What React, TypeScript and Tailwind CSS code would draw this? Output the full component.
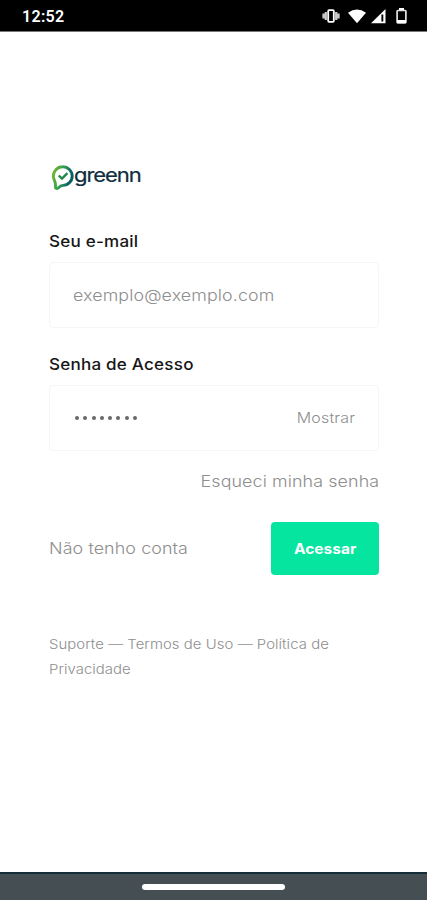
import type { ReactNode } from 'react';

type FieldProps = {
  label: string;
  children: ReactNode;
};

function StatusBar() {
  return (
    <header className="flex h-8 items-center justify-between border-b border-[#777] bg-black pr-[19px] pl-[22px] text-white">
      <span className="mt-[2px] font-[Roboto] text-[16px] leading-5 font-semibold tracking-[0.3px]">
        12:52
      </span>
      <svg width="86" height="18" viewBox="0 0 86 18" fill="white">
        <path d="M1.5 6.5v5M3.8 5v8M14.2 5v8M16.5 6.5v5" stroke="#c8c8c8" strokeWidth="2.3" />
        <rect x="6.2" y="3.2" width="5.6" height="11.6" rx=".8" fill="none" stroke="white" strokeWidth="1.8" />
        <path d="M26 5.7Q35 -.7 44 5.7L35 16.3z" />
        <path d="M49 16.2 63.5 2v14.2z" />
        <path d="M59.4 7.5h1.9v7h-1.9z" fill="black" />
        <path d="M77 1h5v2.5h-5z" />
        <rect x="75.1" y="3.5" width="8.8" height="12.3" rx=".8" fill="none" stroke="#e4e4e4" strokeWidth="1.7" />
        <path d="M75 13h9v3h-9z" />
      </svg>
    </header>
  );
}

function Logo() {
  return (
    <svg width="96" height="30" viewBox="0 0 96 30" className="block">
      <defs>
        <linearGradient id="pin" x1="0" y1="0" x2="1" y2=".3">
          <stop offset="0" stopColor="#76b82a" />
          <stop offset=".5" stopColor="#32a151" />
          <stop offset="1" stopColor="#075f66" />
        </linearGradient>
      </defs>
      <path
        d="M13.8 4.8a9.4 9.4 0 0 0-8.3 13.8q1.2 2.200 1 7.300 1.700 1.300 3.300-.4 1.400-2 4.200-2.100a9.300 9.300 0 0 0-.2-18.600"
        fill="none"
        stroke="url(#pin)"
        strokeWidth="2.9"
      />
      <path d="m9.700 13.500 3.300 3.100 5.400-5.400" fill="none" stroke="#20874f" strokeWidth="2.4" />
      <text
        transform="translate(25 19.8) scale(1.13 1)"
        textLength="60"
        lengthAdjust="spacing"
        fill="#102d3c"
        fontFamily="Inter, sans-serif"
        fontSize="19.5"
        fontWeight="400"
        stroke="#102d3c"
        strokeWidth=".2"
      >
        greenn
      </text>
    </svg>
  );
}

function Field({ label, children }: FieldProps) {
  return (
    <label className="block">
      <span className="block h-8 origin-left scale-x-110 text-[15.5px] leading-6 font-medium tracking-[0.2px] text-[#161616]">
        {label}
      </span>
      <div className="flex h-[66px] items-center justify-between rounded border border-[#f6f6f6] pr-[23px] pl-[23px]">
        {children}
      </div>
    </label>
  );
}

export default function App() {
  return (
    <div className="flex h-[900px] w-[427px] flex-col bg-white font-[Inter,sans-serif] whitespace-nowrap text-[#8e8e8e]">
      <StatusBar />

      <main className="flex-1 pr-12 pl-[49px]">
        <div className="mt-[130px] h-[68px]">
          <Logo />
        </div>

        <div className="flex flex-col gap-[25px]">
          <Field label="Seu e-mail">
            <span className="origin-left scale-x-[1.115] text-[16px] font-light tracking-[0.1px]">
              exemplo@exemplo.com
            </span>
          </Field>
          <Field label="Senha de Acesso">
            <div className="flex gap-[4.3px] pl-[2px]">
              {Array.from({ length: 8 }, (_, i) => (
                <span key={i} className="size-1 rounded-full bg-[#686868]" />
              ))}
            </div>
            <button className="origin-right scale-x-110 text-[14.5px] font-light tracking-[0.2px]">
              Mostrar
            </button>
          </Field>
        </div>

        <div className="mt-[18px] flex justify-end">
          <a className="origin-right scale-x-[1.115] text-[16px] leading-6 font-light tracking-[0.1px]">
            Esqueci minha senha
          </a>
        </div>

        <div className="mt-[29px] flex items-center justify-between">
          <a className="mb-px origin-left scale-x-[1.115] text-[16px] font-light tracking-[0.1px]">
            Não tenho conta
          </a>
          <button className="h-[53px] w-[108px] rounded bg-[#06e5a0] text-[14.5px] font-bold text-white">
            <span className="inline-block scale-x-[1.07]">Acessar</span>
          </button>
        </div>

        <footer className="mt-[57px] origin-left scale-x-[1.145] text-[13px] leading-[25px] font-light tracking-[0.05px]">
          <p>Suporte — Termos de Uso — Política de</p>
          <p>Privacidade</p>
        </footer>
      </main>

      <div className="flex h-7 items-center justify-center border-t-2 border-[#142c35] bg-[#454e52]">
        <div className="mb-px h-[6px] w-[143px] rounded-full bg-white" />
      </div>
    </div>
  );
}
